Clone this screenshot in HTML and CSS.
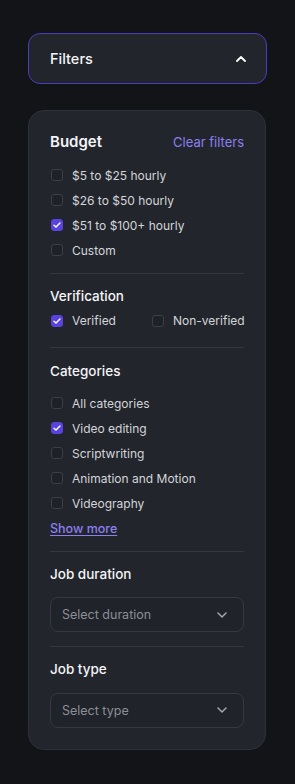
FILE: index.html
```html
<!DOCTYPE html>
<html>
<head>
<meta charset="utf-8">
<link rel="stylesheet" href="styles.css">
</head>
<body>
<div class="wrap">
  <div class="header">
    <span class="header-title">Filters</span>
    <svg class="chev-up" width="10" height="6" viewBox="0 0 10 6"><path d="M1 5 L5 1 L9 5" fill="none" stroke="#ffffff" stroke-width="1.8" stroke-linecap="round" stroke-linejoin="round"/></svg>
  </div>
  <div class="panel">
    <div class="section budget">
      <div class="title-row">
        <span class="title bold">Budget</span>
        <span class="clear">Clear filters</span>
      </div>
      <div class="list">
        <div class="row"><span class="box"></span><span>$5 to $25 hourly</span></div>
        <div class="row"><span class="box"></span><span>$26 to $50 hourly</span></div>
        <div class="row"><span class="box checked"><svg width="8" height="6" viewBox="0 0 8 6"><path d="M1 3.2 L3 5 L7 1" fill="none" stroke="#fff" stroke-width="1.4" stroke-linecap="round" stroke-linejoin="round"/></svg></span><span>$51 to $100+ hourly</span></div>
        <div class="row"><span class="box"></span><span>Custom</span></div>
      </div>
    </div>
    <div class="section verification">
      <div class="title">Verification</div>
      <div class="inline">
        <div class="row"><span class="box checked"><svg width="8" height="6" viewBox="0 0 8 6"><path d="M1 3.2 L3 5 L7 1" fill="none" stroke="#fff" stroke-width="1.4" stroke-linecap="round" stroke-linejoin="round"/></svg></span><span>Verified</span></div>
        <div class="row"><span class="box"></span><span>Non-verified</span></div>
      </div>
    </div>
    <div class="section categories">
      <div class="title">Categories</div>
      <div class="list">
        <div class="row"><span class="box"></span><span>All categories</span></div>
        <div class="row"><span class="box checked"><svg width="8" height="6" viewBox="0 0 8 6"><path d="M1 3.2 L3 5 L7 1" fill="none" stroke="#fff" stroke-width="1.4" stroke-linecap="round" stroke-linejoin="round"/></svg></span><span>Video editing</span></div>
        <div class="row"><span class="box"></span><span>Scriptwriting</span></div>
        <div class="row"><span class="box"></span><span>Animation and Motion</span></div>
        <div class="row"><span class="box"></span><span>Videography</span></div>
        <div class="row"><span class="more">Show more</span></div>
      </div>
    </div>
    <div class="section dropdown">
      <div class="title">Job duration</div>
      <div class="select">
        <span>Select duration</span>
        <svg width="10" height="6" viewBox="0 0 10 6"><path d="M1 1 L5 5 L9 1" fill="none" stroke="#a3a6ad" stroke-width="1.5" stroke-linecap="round" stroke-linejoin="round"/></svg>
      </div>
    </div>
    <div class="section dropdown">
      <div class="title">Job type</div>
      <div class="select">
        <span>Select type</span>
        <svg width="10" height="6" viewBox="0 0 10 6"><path d="M1 1 L5 5 L9 1" fill="none" stroke="#a3a6ad" stroke-width="1.5" stroke-linecap="round" stroke-linejoin="round"/></svg>
      </div>
    </div>
  </div>
</div>
</body>
</html>
```
FILE: styles.css
```css
* { box-sizing: border-box; }
html, body { margin: 0; padding: 0; }
body {
  background: #121418;
  font-family: "Inter", "Open Sans", sans-serif;
  color: #f1f2f4;
}
.wrap {
  padding: 33px 28px 0 28px;
  width: 295px;
}
.header {
  height: 51px;
  border: 1px solid #4b3cc0;
  border-radius: 12px;
  background: #22252c;
  display: flex;
  align-items: center;
  justify-content: space-between;
  padding: 0 20px 0 21px;
}
.header-title {
  font-size: 14.5px;
  font-weight: 500;
  color: #f3f4f6;
}
.chev-up { display: block; }
.panel {
  margin-top: 26px;
  width: 238px;
  border: 1px solid #2d3139;
  border-radius: 16px;
  background: #22252c;
  padding: 21px 21px 21px 21px;
}
.section { display: flex; flex-direction: column; }
.section + .section { border-top: 1px solid #33373f; }
.title-row { display: flex; justify-content: space-between; align-items: center; height: 20px; }
.title { font-size: 13.5px; font-weight: 500; color: #f3f4f6; line-height: 20px; height: 20px; }
.title.bold { font-size: 15px; font-weight: 600; }
.clear { font-size: 13px; color: #8c7ff0; }
.list { display: flex; flex-direction: column; }
.row {
  height: 25px;
  display: flex;
  align-items: center;
  gap: 9px;
  font-size: 12px;
  color: #d3d5d9;
  white-space: nowrap;
}
.box {
  width: 12px;
  height: 12px;
  margin-left: 1px;
  border: 1px solid #3b3f48;
  border-radius: 3px;
  background: #1e2127;
  display: flex;
  align-items: center;
  justify-content: center;
  flex: none;
}
.box.checked { background: #5a43dc; border-color: #5a43dc; }
.box svg { display: block; }
.budget { padding-bottom: 10px; }
.budget .list { margin-top: 10.5px; }
.verification { padding-top: 12px; padding-bottom: 14px; }
.verification .inline { display: flex; margin-top: 2.5px; }
.verification .inline .row:first-child { width: 101px; flex: none; }
.categories { padding-top: 13px; padding-bottom: 10px; }
.categories .list { margin-top: 9.5px; }
.more { color: #8c7ff0; text-decoration: underline; text-underline-offset: 2px; font-size: 12.5px; font-weight: 500; }
.dropdown { padding-top: 12px; padding-bottom: 14px; }
.dropdown:last-child { padding-bottom: 0; }
.select {
  margin-top: 13.5px;
  height: 35px;
  border: 1px solid #353942;
  border-radius: 8px;
  background: #20232a;
  display: flex;
  align-items: center;
  justify-content: space-between;
  padding: 0 16px 0 11px;
  font-size: 12.5px;
  color: #8b8e95;
}
.select svg { display: block; }
```
